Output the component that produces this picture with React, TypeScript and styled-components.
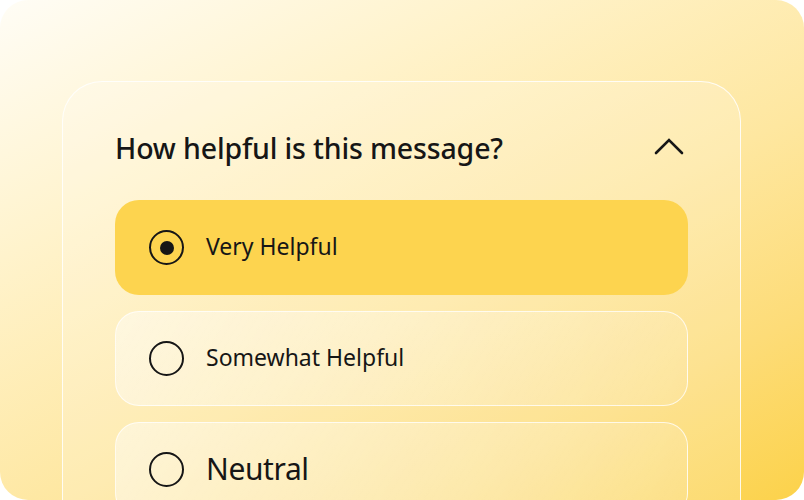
import React from "react";
import styled, { createGlobalStyle } from "styled-components";

const Global = createGlobalStyle`
  html, body { margin: 0; padding: 0; background: #ffffff; }
  body { font-family: "Noto Sans", "DejaVu Sans", sans-serif; }
`;

const Frame = styled.div`
  width: 804px;
  height: 500px;
  box-sizing: border-box;
  border-radius: 28px;
  overflow: hidden;
  background: linear-gradient(152deg, #fffdf6 0%, #fff3cc 28%, #fee7a0 58%, #fddc78 80%, #fcd24a 100%);
  padding: 81px 63px 0 62px;
`;

const Card = styled.section`
  box-sizing: border-box;
  height: 460px;
  border: 1.5px solid rgba(255, 255, 255, 0.85);
  border-bottom: none;
  border-radius: 40px 40px 0 0;
  background: rgba(255, 255, 255, 0.18);
  padding: 40px 52px 0 52px;
  display: flex;
  flex-direction: column;
  gap: 24px;
`;

const Header = styled.div`
  height: 54px;
  display: flex;
  align-items: center;
  justify-content: space-between;
`;

const Title = styled.h2`
  margin: 0;
  font-size: 28.5px;
  font-weight: 500;
  letter-spacing: -0.15px;
  line-height: 1.2;
  color: #161616;
  margin-top: -2px;
`;

const Chevron = styled.svg`
  width: 30px;
  height: 20px;
  margin-right: 4px;
  margin-top: -2px;
`;

const Options = styled.div`
  display: flex;
  flex-direction: column;
  gap: 16px;
`;

const Option = styled.div<{ $selected?: boolean }>`
  box-sizing: border-box;
  height: 95px;
  border-radius: 24px;
  display: flex;
  align-items: center;
  gap: 22px;
  padding-left: 33px;
  ${(p) =>
    p.$selected
      ? `background: #fdd44f; border: 1px solid transparent;`
      : `background: linear-gradient(120deg, rgba(255,255,255,0.45), rgba(255,255,255,0.12));
         border: 1.5px solid rgba(255,255,255,0.75);`}
`;

const Radio = styled.span<{ $selected?: boolean }>`
  box-sizing: border-box;
  width: 35px;
  height: 35px;
  border-radius: 50%;
  border: 2.6px solid #161616;
  display: flex;
  align-items: center;
  justify-content: center;
  flex: none;
  &::after {
    content: "";
    width: 14px;
    height: 14px;
    border-radius: 50%;
    background: #161616;
    display: ${(p) => (p.$selected ? "block" : "none")};
  }
`;

const Label = styled.span<{ $large?: boolean }>`
  font-size: ${(p) => (p.$large ? "30px" : "23px")};
  letter-spacing: ${(p) => (p.$large ? "-0.4px" : "0px")};
  line-height: 1.2;
  margin-top: -1px;
  color: #161616;
  font-weight: 400;
`;

const items = [
  { label: "Very Helpful", selected: true },
  { label: "Somewhat Helpful" },
  { label: "Neutral", large: true },
];

export default function App() {
  return (
    <>
      <Global />
      <Frame>
        <Card>
          <Header>
            <Title>How helpful is this message?</Title>
            <Chevron viewBox="0 0 30 20" fill="none">
              <path d="M2 15 L15 2 L28 15" stroke="#161616" strokeWidth="2.6" strokeLinecap="round" strokeLinejoin="miter" />
            </Chevron>
          </Header>
          <Options>
            {items.map((it) => (
              <Option key={it.label} $selected={it.selected}>
                <Radio $selected={it.selected} />
                <Label $large={it.large}>{it.label}</Label>
              </Option>
            ))}
          </Options>
        </Card>
      </Frame>
    </>
  );
}
